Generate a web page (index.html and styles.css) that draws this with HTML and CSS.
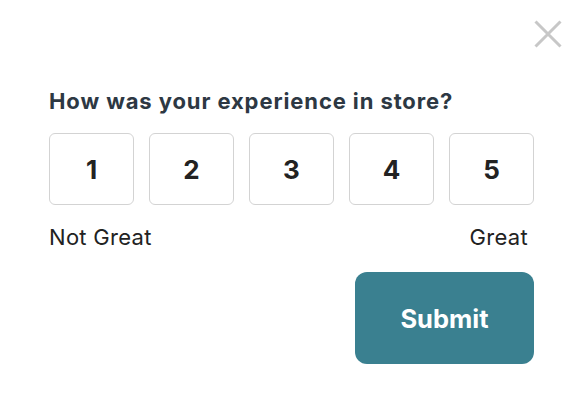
FILE: index.html
```html
<!DOCTYPE html>
<html lang="en">
<head>
    <meta charset="UTF-8">
    <meta name="viewport" content="width=device-width, initial-scale=1.0">
    <title>Feedback</title>
    <link rel="stylesheet" href="styles.css">
</head>
<body>
    <div class="survey">
        <div class="top-bar">
            <button class="close" aria-label="Close">
                <svg width="28" height="28" viewBox="0 0 28 28">
                    <path d="M1.5 1.5 L26.5 26.5 M26.5 1.5 L1.5 26.5" stroke="#c7c7c7" stroke-width="3" fill="none"/>
                </svg>
            </button>
        </div>

        <h2 class="question">How was your experience in store?</h2>

        <div class="scale">
            <button class="option">1</button>
            <button class="option">2</button>
            <button class="option">3</button>
            <button class="option">4</button>
            <button class="option">5</button>
        </div>

        <div class="labels">
            <span>Not Great</span>
            <span>Great</span>
        </div>

        <div class="actions">
            <button class="submit">Submit</button>
        </div>
    </div>
</body>
</html>
```

FILE: styles.css
```css
body {
    margin: 0;
    padding: 0;
    background-color: #fff;
    font-family: Inter, "Noto Sans", sans-serif;
}
.survey {
    width: 485px;
    padding: 20px 0 0 49px;
}
.top-bar {
    display: flex;
    justify-content: flex-end;
    margin-right: -28px;
}
.close {
    width: 28px;
    height: 28px;
    padding: 0;
    border: none;
    background: none;
    cursor: pointer;
}
.close svg {
    display: block;
}
.question {
    margin: 41px 0 0;
    font-size: 22px;
    line-height: 24px;
    letter-spacing: 0.9px;
    font-weight: 700;
    color: #2d3843;
}
.scale {
    display: flex;
    gap: 15px;
    margin-top: 20px;
}
.option {
    width: 85px;
    height: 72px;
    border: 1px solid #d3d3d3;
    border-radius: 6px;
    background: #fff;
    font-family: inherit;
    font-size: 26px;
    font-weight: 700;
    color: #222;
    cursor: pointer;
}
.labels {
    display: flex;
    justify-content: space-between;
    margin-top: 19px;
    padding-right: 6px;
    font-size: 22px;
    line-height: 26px;
    letter-spacing: 0.3px;
    color: #222;
}
.actions {
    display: flex;
    justify-content: flex-end;
    margin-top: 22px;
}
.submit {
    width: 179px;
    height: 92px;
    border: none;
    border-radius: 12px;
    background-color: #3a8090;
    color: #fff;
    font-family: inherit;
    font-size: 25.5px;
    font-weight: 700;
    cursor: pointer;
}
```
